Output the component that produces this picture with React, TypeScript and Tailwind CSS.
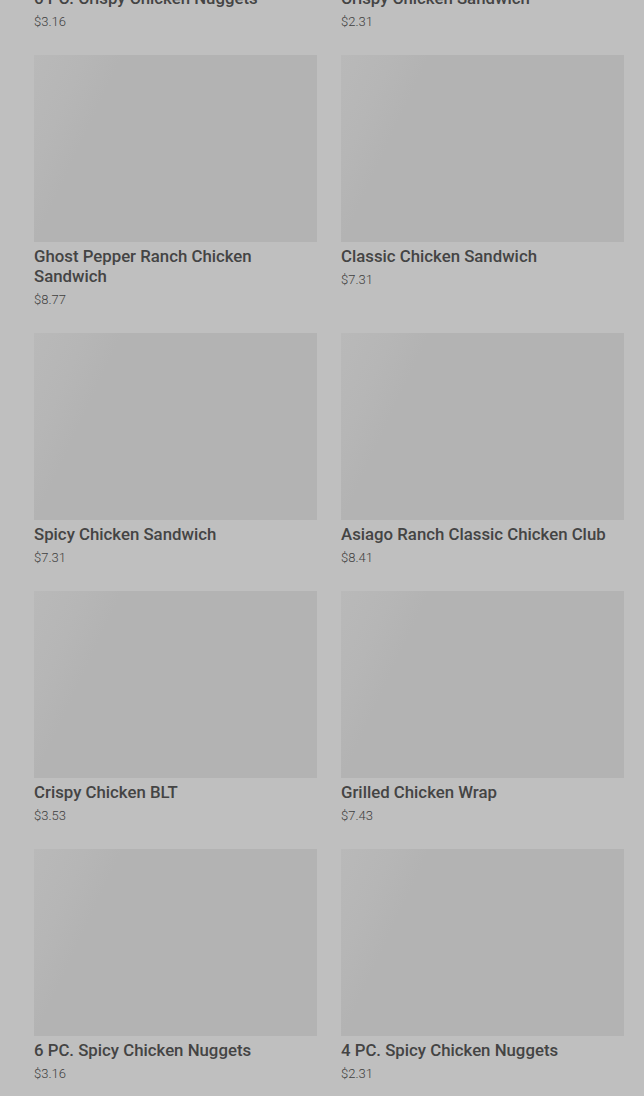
const items = [
    { name: '6 PC. Crispy Chicken Nuggets', price: '$3.16' },
    { name: 'Crispy Chicken Sandwich', price: '$2.31' },
    { name: 'Ghost Pepper Ranch Chicken Sandwich', price: '$8.77' },
    { name: 'Classic Chicken Sandwich', price: '$7.31' },
    { name: 'Spicy Chicken Sandwich', price: '$7.31' },
    { name: 'Asiago Ranch Classic Chicken Club', price: '$8.41' },
    { name: 'Crispy Chicken BLT', price: '$3.53' },
    { name: 'Grilled Chicken Wrap', price: '$7.43' },
    { name: '6 PC. Spicy Chicken Nuggets', price: '$3.16' },
    { name: '4 PC. Spicy Chicken Nuggets', price: '$2.31' },
];

const App = () => {
    return (
        <div className="h-[1096px] overflow-hidden bg-[#bfbfbf] font-['Roboto',sans-serif]">
            {/* product grid, scrolled part way down */}
            <div className="mt-[-203px] grid grid-cols-2 gap-x-6 gap-y-[25px] pr-5 pl-[34px]">
                {items.map((item, index) => (
                    <div key={index} className="flex flex-col">
                        <div className="h-[187px] w-full bg-[linear-gradient(115deg,#b9b9b9_0%,#b6b6b6_14%,#b3b3b3_24%,#b3b3b3_100%)]" />
                        <p className="mt-1 text-[16.8px] leading-5 font-medium text-[#444444]">{item.name}</p>
                        <p className="mt-[6px] text-[13px] leading-4 font-light text-[#404040]">{item.price}</p>
                    </div>
                ))}
            </div>
        </div>
    );
};

export default App;
